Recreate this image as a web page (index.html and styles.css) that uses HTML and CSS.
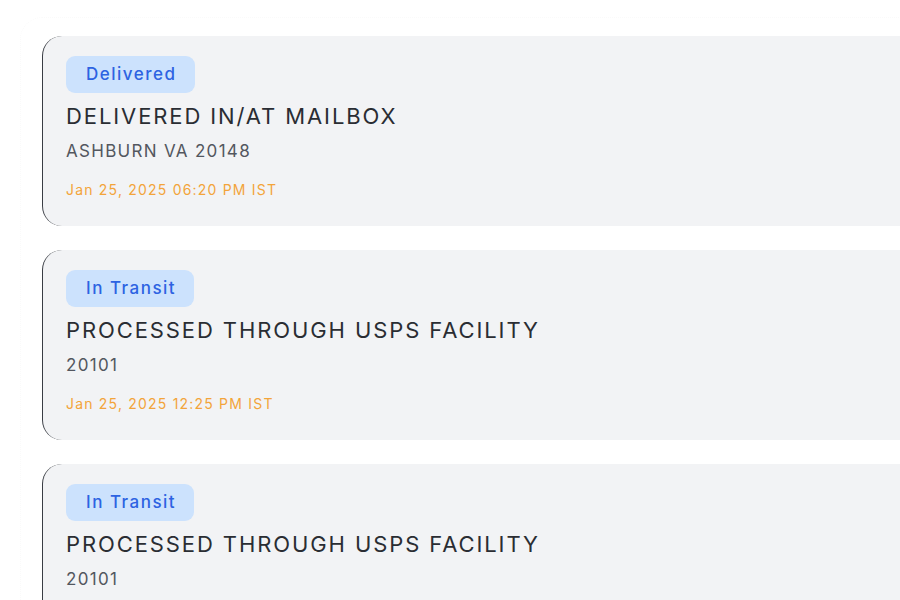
FILE: index.html
```html
<!DOCTYPE html>
<html>
<head>
<meta charset="utf-8">
<link rel="stylesheet" href="styles.css">
</head>
<body>
<div class="panel">
  <div class="timeline">
    <div class="event">
      <span class="badge">Delivered</span>
      <div class="title">DELIVERED IN/AT MAILBOX</div>
      <div class="place">ASHBURN VA 20148</div>
      <div class="time">Jan 25, 2025 06:20 PM IST</div>
    </div>
    <div class="event">
      <span class="badge">In Transit</span>
      <div class="title">PROCESSED THROUGH USPS FACILITY</div>
      <div class="place">20101</div>
      <div class="time">Jan 25, 2025 12:25 PM IST</div>
    </div>
    <div class="event">
      <span class="badge">In Transit</span>
      <div class="title">PROCESSED THROUGH USPS FACILITY</div>
      <div class="place">20101</div>
      <div class="time">Jan 25, 2025 09:10 AM IST</div>
    </div>
  </div>
</div>
</body>
</html>
```
FILE: styles.css
```css
html, body {
  margin: 0;
  padding: 0;
  background: #ffffff;
  overflow: hidden;
}
body {
  font-family: Inter, "Noto Sans", sans-serif;
  width: 900px;
  height: 600px;
}
.panel {
  margin: 17px 0 0 20px;
  width: 940px;
  border: 1px dotted #fafafa;
  border-radius: 22px;
  padding: 18px 0 0 21px;
  box-sizing: border-box;
}
.timeline {
  display: flex;
  flex-direction: column;
  gap: 24px;
  width: 880px;
}
.event {
  background: #f2f3f5;
  border-left: 1.5px solid #3a3d44;
  border-radius: 20px;
  padding: 20px 0 26px 23px;
  display: flex;
  flex-direction: column;
  align-items: flex-start;
}
.badge {
  display: inline-block;
  background: #cce2fd;
  color: #2d63e2;
  font-size: 17px;
  font-weight: 500;
  letter-spacing: 1.5px;
  line-height: 37px;
  height: 37px;
  padding: 0 18px 0 20px;
  border-radius: 9px;
}
.title {
  margin-top: 8px;
  font-size: 22px;
  letter-spacing: 1.9px;
  line-height: 30px;
  color: #2a2d33;
  font-weight: 400;
}
.place {
  margin-top: 8px;
  font-size: 17px;
  letter-spacing: 1.3px;
  line-height: 24px;
  color: #53575f;
}
.time {
  margin-top: 17px;
  font-size: 14px;
  letter-spacing: 1.2px;
  line-height: 20px;
  color: #f3a43a;
}
```
